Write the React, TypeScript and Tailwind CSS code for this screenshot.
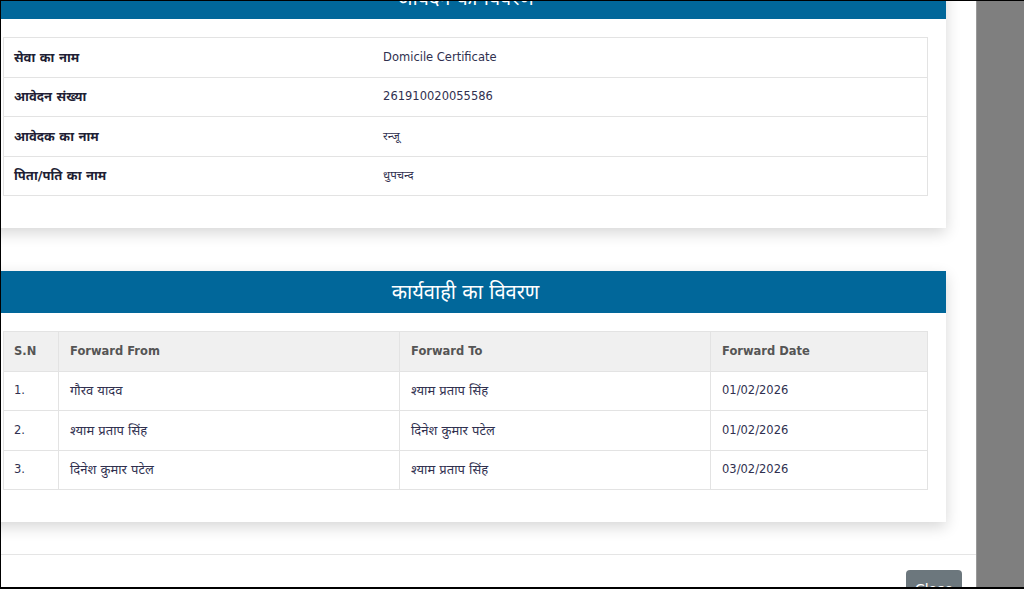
import React from 'react';

const FONT = "font-['DejaVu_Sans','Noto_Sans_Devanagari','Lohit_Devanagari','FreeSans',sans-serif]";

const APPLICANT = [
  { label: 'सेवा का नाम', value: 'Domicile Certificate' },
  { label: 'आवेदन संख्या', value: '261910020055586' },
  { label: 'आवेदक का नाम', value: 'रन्जू' },
  { label: 'पिता/पति का नाम', value: 'धुपचन्द' },
];

const ACTIONS = [
  { sn: '1.', from: 'गौरव यादव', to: 'श्याम प्रताप सिंह', date: '01/02/2026' },
  { sn: '2.', from: 'श्याम प्रताप सिंह', to: 'दिनेश कुमार पटेल', date: '01/02/2026' },
  { sn: '3.', from: 'दिनेश कुमार पटेल', to: 'श्याम प्रताप सिंह', date: '03/02/2026' },
];

function Card({ title, className, children }: { title: string; className?: string; children: React.ReactNode }) {
  return (
    <div className={`bg-white shadow-[0_5px_14px_rgba(0,0,0,0.16)] ${className ?? ''}`}>
      <div className="h-[42px] bg-[#01679a] flex items-center justify-center text-white text-[20px] leading-none">
        {title}
      </div>
      <div className="px-[18px] pt-[18px] pb-[32px]">{children}</div>
    </div>
  );
}

export default function App() {
  return (
    <div className={`w-[1024px] h-[589px] overflow-hidden border-t border-l border-b-2 border-black bg-[#7f7f7f] flex ${FONT}`}>
      {/* modal */}
      <div className="w-[976px] shrink-0 bg-white flex flex-col overflow-hidden border-r border-[#9a9a9a]">
        <div className="h-[553px] shrink-0 -ml-[16px] w-[961px] flex flex-col">
          <Card title="आवेदन का विवरण" className="-mt-[24px]">
            <table className="w-full border-collapse border border-[#e3e3e3] text-[11.5px]">
              <tbody>
                {APPLICANT.map((row) => (
                  <tr key={row.label} className="h-[39.5px] border-b border-[#e3e3e3]">
                    <td className="w-[40%] pl-[10px] font-bold text-[#1f1f35] text-[13px]">{row.label}</td>
                    <td className="pl-[10px] text-[#30304f]">{row.value}</td>
                  </tr>
                ))}
              </tbody>
            </table>
          </Card>

          <Card title="कार्यवाही का विवरण" className="mt-[43px]">
            <table className="w-full border-collapse border border-[#e3e3e3] text-[11.5px] table-fixed">
              <thead>
                <tr className="h-[39.5px] bg-[#f0f0f0] text-[#555] font-bold text-left">
                  <th className="w-[55px] pl-[10px] border border-[#e3e3e3]">S.N</th>
                  <th className="w-[341px] pl-[11px] border border-[#e3e3e3]">Forward From</th>
                  <th className="w-[311px] pl-[11px] border border-[#e3e3e3]">Forward To</th>
                  <th className="pl-[11px] border border-[#e3e3e3]">Forward Date</th>
                </tr>
              </thead>
              <tbody className="text-[#30304f]">
                {ACTIONS.map((row) => (
                  <tr key={row.sn} className="h-[39.5px]">
                    <td className="pl-[10px] border border-[#e3e3e3]">{row.sn}</td>
                    <td className="pl-[11px] border border-[#e3e3e3] text-[13px]">{row.from}</td>
                    <td className="pl-[11px] border border-[#e3e3e3] text-[13px]">{row.to}</td>
                    <td className="pl-[11px] border border-[#e3e3e3]">{row.date}</td>
                  </tr>
                ))}
              </tbody>
            </table>
          </Card>
        </div>

        {/* footer */}
        <div className="border-t border-[#e5e5e5] flex justify-end pt-[15px] pr-[14px]">
          <button className="h-[34px] w-[56px] rounded-[4px] bg-[#6c777d] text-white text-[14px] leading-none pt-[4px]">
            Close
          </button>
        </div>
      </div>
    </div>
  );
}
